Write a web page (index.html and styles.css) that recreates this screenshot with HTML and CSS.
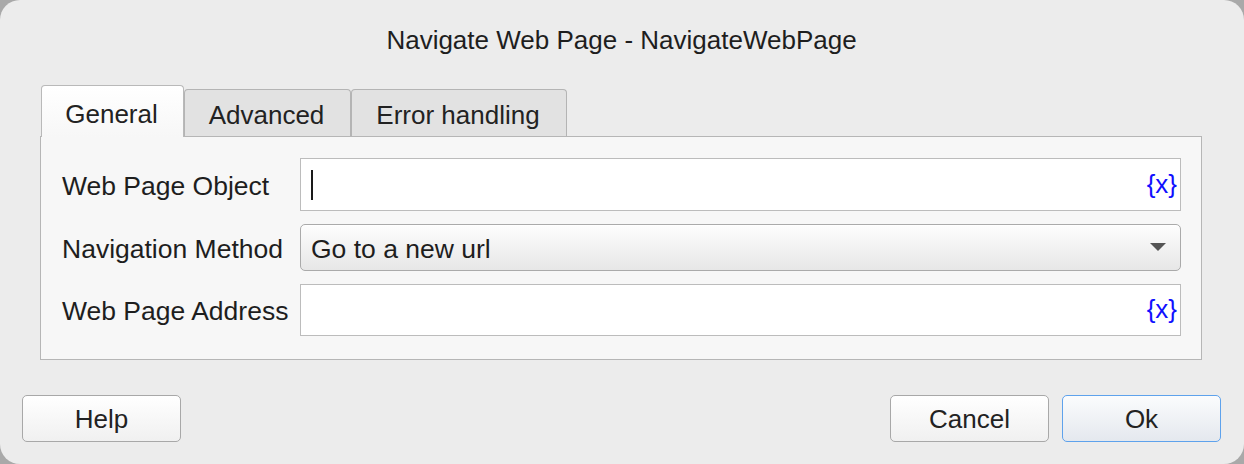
FILE: index.html
```html
<!DOCTYPE html>
<html lang="en">
<head>
<meta charset="utf-8">
<title>Navigate Web Page - NavigateWebPage</title>
<link rel="stylesheet" href="styles.css">
</head>
<body>
<div class="window">
  <div class="title">Navigate Web Page - NavigateWebPage</div>
  <div class="content">
    <div class="tabs">
      <div class="tab tab-general active">General</div>
      <div class="tab tab-advanced">Advanced</div>
      <div class="tab tab-error">Error handling</div>
    </div>
    <div class="panel">
      <label class="label">Web Page Object</label>
      <div class="field text-field">
        <span class="caret"></span>
        <span class="var">{x}</span>
      </div>
      <label class="label">Navigation Method</label>
      <div class="field select-field">
        <span class="select-text">Go to a new url</span>
        <svg class="arrow" width="16" height="8" viewBox="0 0 16 8"><path d="M0 0 H16 L8 8 Z" fill="#555"/></svg>
      </div>
      <label class="label">Web Page Address</label>
      <div class="field text-field">
        <span class="var">{x}</span>
      </div>
    </div>
  </div>
  <div class="buttons">
    <button class="btn">Help</button>
    <div class="spacer"></div>
    <button class="btn">Cancel</button>
    <button class="btn btn-default">Ok</button>
  </div>
</div>
</body>
</html>
```
FILE: styles.css
```css
html, body {
  margin: 0;
  padding: 0;
  background: #a9a9a9;
}
body {
  width: 1244px;
  height: 464px;
  font-family: "Liberation Sans", Arial, sans-serif;
  color: #222;
}
.window {
  box-sizing: border-box;
  width: 1244px;
  height: 464px;
  background: #ececec;
  border-radius: 20px;
  padding: 0 23px 0 22px;
  display: flex;
  flex-direction: column;
}
.title {
  padding-top: 27px;
  height: 26px;
  line-height: 26px;
  font-size: 26px;
  text-align: center;
  color: #1e1e1e;
  margin-bottom: 32px;
}
.content {
  margin: 0 19px 0 18px;
}
.tabs {
  display: flex;
  align-items: flex-end;
  height: 51px;
  padding-left: 1px;
  position: relative;
  z-index: 1;
}
.tab {
  box-sizing: border-box;
  height: 47px;
  border: 1px solid #b4b4b4;
  border-bottom: none;
  border-radius: 4px 4px 0 0;
  background: #e2e2e2;
  font-size: 26px;
  line-height: 26px;
  padding-top: 12px;
  text-align: center;
  color: #222;
}
.tab.active {
  height: 52px;
  margin-bottom: -1px;
  padding-top: 15px;
  background: linear-gradient(#ffffff, #f7f7f7);
  border-color: #b9b9b9;
}
.tab-general { width: 143px; padding-right: 2px; }
.tab-advanced { width: 167px; padding-right: 2px; }
.tab-error { width: 216px; padding-right: 2px; }

.panel {
  box-sizing: border-box;
  height: 224px;
  border: 1px solid #b6b6b6;
  background: #f7f7f7;
  padding: 21px 20px 0 21px;
  display: grid;
  grid-template-columns: 238px 881px;
  grid-template-rows: 53px 47px 52px;
  row-gap: 13px;
  align-items: center;
}
.label {
  font-size: 26.5px;
  color: #1e1e1e;
  white-space: nowrap;
  padding-top: 3px;
}
.field {
  box-sizing: border-box;
  height: 100%;
  display: flex;
  align-items: center;
}
.text-field {
  background: #ffffff;
  border: 1px solid #bcbcbc;
  padding: 0 3px 0 10px;
}
.caret {
  width: 2px;
  height: 30px;
  background: #1a1a1a;
}
.var {
  margin-left: auto;
  font-size: 26px;
  color: #1010ff;
  line-height: 26px;
  padding-bottom: 2px;
}
.select-field {
  background: linear-gradient(#fdfdfd, #e7e7e7);
  border: 1px solid #aaaaaa;
  border-radius: 5px;
  padding: 0 14px 0 10px;
  box-shadow: inset 0 1px 0 #ffffff;
}
.select-text {
  font-size: 26.5px;
  color: #1e1e1e;
  padding-top: 3px;
}
.arrow {
  margin-left: auto;
  margin-top: -2px;
}

.buttons {
  display: flex;
  margin-top: 35px;
  gap: 13px;
}
.spacer { flex: 1; }
.btn {
  box-sizing: border-box;
  width: 159px;
  height: 47px;
  border: 1px solid #a8a8a8;
  border-radius: 5px;
  background: linear-gradient(#ffffff, #f0f0f0);
  font-family: "Liberation Sans", Arial, sans-serif;
  font-size: 26px;
  color: #222;
  padding: 2px 0 0;
}
.btn-default {
  border: 1.5px solid #5ea2ec;
  background: linear-gradient(#fbfcfd, #e4e8ee);
}
```
